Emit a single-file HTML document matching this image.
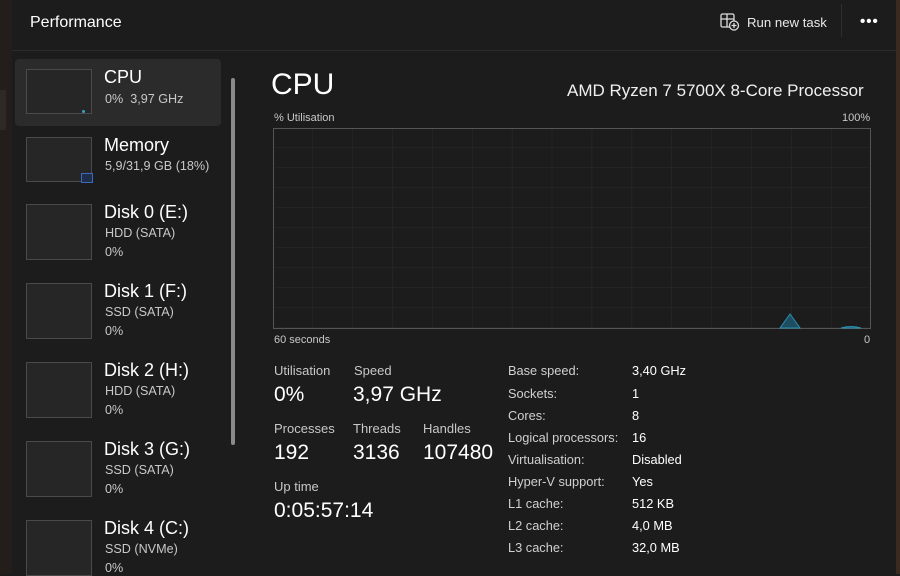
<!DOCTYPE html><html><head><style>
body{margin:0;width:900px;height:574px;background:#1c1c1c;font-family:"Liberation Sans",sans-serif;color:#fff;position:relative;overflow:hidden}
.a{position:absolute;white-space:nowrap}
.th{position:absolute;left:26px;width:66px;height:45px;border:1px solid #4a4a4a;background:#262626;box-sizing:border-box}
.n{position:absolute;left:104px;font-size:18px;color:#fff}
.s{position:absolute;left:105px;font-size:12.6px;color:#c8c8c8}
.l{font-size:13px;color:#c8c8c8}
.v{font-size:21px;color:#fff}
.k{position:absolute;left:508px;font-size:12.8px;color:#d0d0d0}
.kv{position:absolute;left:632px;font-size:12.8px;color:#fff}
</style></head><body>
<div class="a" style="left:0;top:0;width:12px;height:574px;background:#231d1b"></div>
<div class="a" style="left:0;top:90px;width:6px;height:40px;background:#2e2826"></div>
<div class="a" style="left:896px;top:0;width:4px;height:574px;background:#3a2a20"></div>
<div class="a" style="left:12px;top:50px;width:884px;height:1px;background:#2c2c2c"></div>
<div class="a" style="left:30px;top:14px;font-size:16px">Performance</div>
<svg class="a" style="left:720px;top:13px" width="20" height="18" viewBox="0 0 20 18" fill="none" stroke="#ddd" stroke-width="1.3"><rect x="1" y="1" width="13" height="13" rx="1.5"/><path d="M1 6h13M7 1v13"/><circle cx="14" cy="12.5" r="4.5" fill="#1c1c1c"/><path d="M14 10v5M11.5 12.5h5"/></svg>
<div class="a" style="left:747px;top:15px;font-size:13.2px;color:#e8e8e8">Run new task</div>
<div class="a" style="left:841px;top:4px;width:1px;height:33px;background:#2e2e2e"></div>
<div class="a" style="left:860px;top:13px;font-size:15px;letter-spacing:1px;font-weight:bold">•••</div>
<div class="a" style="left:15px;top:59px;width:206px;height:67px;background:#2b2b2b;border-radius:4px"></div>
<div class="a" style="left:231px;top:78px;width:4px;height:367px;background:#8a8a8a;border-radius:2px"></div>
<div class="th" style="top:69px"></div><div class="a" style="left:82px;top:110px;width:3px;height:3px;background:#3aa0c0;border-radius:50%"></div>
<div class="n" style="top:67px">CPU</div><div class="s" style="top:92px">0%&nbsp; 3,97 GHz</div>
<div class="th" style="top:137px"></div><div class="a" style="left:81px;top:173px;width:10px;height:8px;border:1px solid #3a6ac0;background:#1f2e4a"></div>
<div class="n" style="top:135px">Memory</div><div class="s" style="top:159px">5,9/31,9 GB (18%)</div>
<div class="th" style="top:204px;height:56px"></div><div class="n" style="top:202px">Disk 0 (E:)</div><div class="s" style="top:226px">HDD (SATA)</div><div class="s" style="top:245px">0%</div>
<div class="th" style="top:283px;height:56px"></div><div class="n" style="top:281px">Disk 1 (F:)</div><div class="s" style="top:305px">SSD (SATA)</div><div class="s" style="top:324px">0%</div>
<div class="th" style="top:362px;height:56px"></div><div class="n" style="top:360px">Disk 2 (H:)</div><div class="s" style="top:384px">HDD (SATA)</div><div class="s" style="top:403px">0%</div>
<div class="th" style="top:441px;height:56px"></div><div class="n" style="top:439px">Disk 3 (G:)</div><div class="s" style="top:463px">SSD (SATA)</div><div class="s" style="top:482px">0%</div>
<div class="th" style="top:520px;height:56px"></div><div class="n" style="top:518px">Disk 4 (C:)</div><div class="s" style="top:542px">SSD (NVMe)</div><div class="s" style="top:561px">0%</div>
<div class="a" style="left:271px;top:68px;font-size:30px">CPU</div>
<div class="a" style="left:567px;top:81px;font-size:17px;color:#f0f0f0">AMD Ryzen 7 5700X 8-Core Processor</div>
<div class="a l" style="left:274px;top:112px;font-size:11px">% Utilisation</div>
<div class="a l" style="left:842px;top:112px;font-size:11px">100%</div>
<svg class="a" style="left:273px;top:128px" width="599" height="202">
<defs><pattern id="g" width="39.9" height="20" patternUnits="userSpaceOnUse"><path d="M39.9 0V20M0 20H39.9" stroke="#2a2a2a" stroke-width="1" fill="none"/></pattern></defs>
<rect x="0.5" y="0.5" width="597" height="200" fill="#1c1c1c" stroke="#555"/>
<rect x="1" y="1" width="596" height="199" fill="url(#g)"/>
<path d="M507 200L517 186L527 200Z" fill="#1d4d60" stroke="#2a8fb0"/>
<path d="M568 200Q578 197 588 200Z" fill="#1d4d60" stroke="#2a8fb0"/>
</svg>
<div class="a l" style="left:274px;top:334px;font-size:11px">60 seconds</div>
<div class="a l" style="left:864px;top:334px;font-size:11px">0</div>
<div class="a l" style="left:274px;top:363px">Utilisation</div><div class="a v" style="left:274px;top:383px">0%</div>
<div class="a l" style="left:354px;top:363px">Speed</div><div class="a v" style="left:353px;top:383px">3,97 GHz</div>
<div class="a l" style="left:274px;top:421px">Processes</div><div class="a v" style="left:274px;top:441px">192</div>
<div class="a l" style="left:353px;top:421px">Threads</div><div class="a v" style="left:353px;top:441px">3136</div>
<div class="a l" style="left:423px;top:421px">Handles</div><div class="a v" style="left:423px;top:441px">107480</div>
<div class="a l" style="left:274px;top:479px">Up time</div><div class="a v" style="left:274px;top:499px">0:05:57:14</div>
<div class="k" style="top:363px">Base speed:</div><div class="kv" style="top:363px">3,40 GHz</div>
<div class="k" style="top:386px">Sockets:</div><div class="kv" style="top:386px">1</div>
<div class="k" style="top:408px">Cores:</div><div class="kv" style="top:408px">8</div>
<div class="k" style="top:430px">Logical processors:</div><div class="kv" style="top:430px">16</div>
<div class="k" style="top:452px">Virtualisation:</div><div class="kv" style="top:452px">Disabled</div>
<div class="k" style="top:474px">Hyper-V support:</div><div class="kv" style="top:474px">Yes</div>
<div class="k" style="top:496px">L1 cache:</div><div class="kv" style="top:496px">512 KB</div>
<div class="k" style="top:518px">L2 cache:</div><div class="kv" style="top:518px">4,0 MB</div>
<div class="k" style="top:540px">L3 cache:</div><div class="kv" style="top:540px">32,0 MB</div>
</body></html>
